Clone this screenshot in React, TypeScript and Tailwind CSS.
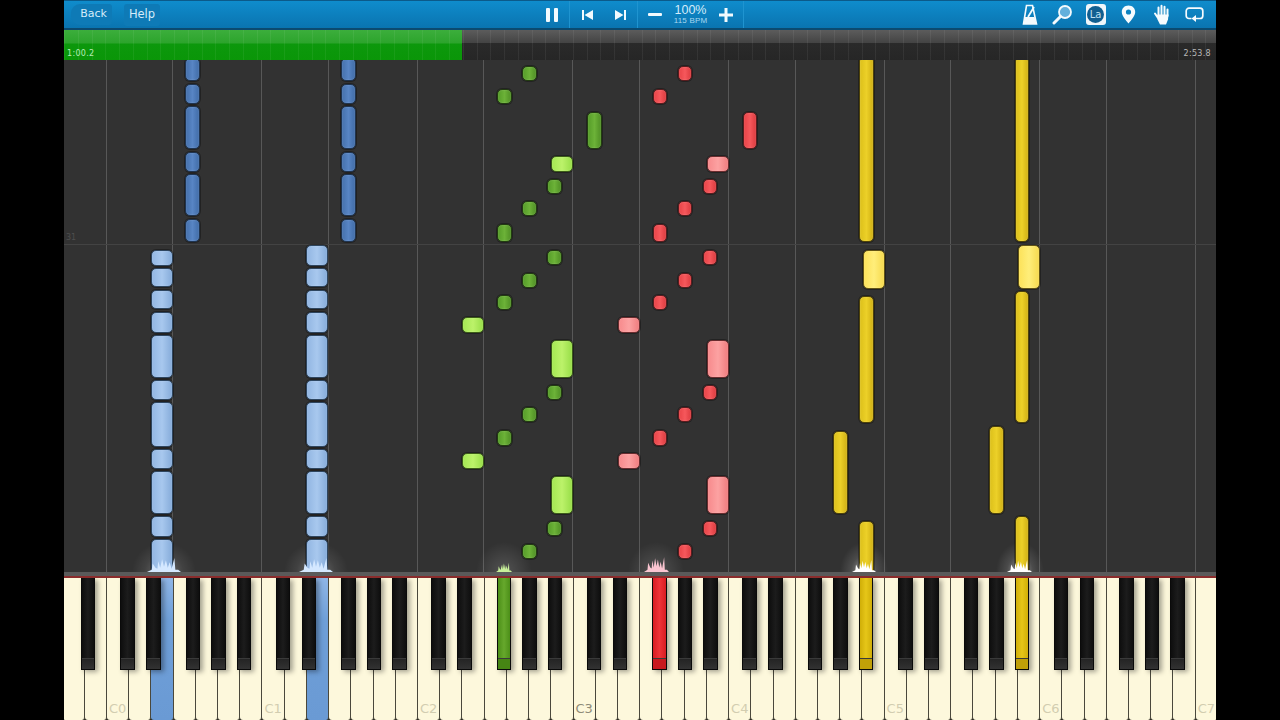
import React from "react";

const C0 = 106;
const OCT = 155.6;

type Kind = "blue" | "blueB" | "green" | "greenB" | "red" | "redB" | "yellow" | "yellowB";

const noteClass: Record<Kind, string> = {
  blue: "bg-[linear-gradient(90deg,#4470ac,#5885c4_50%,#406ca8)] border-[#1f3450]",
  blueB: "bg-[linear-gradient(90deg,#92b6e2,#a8c8ee_50%,#86acda)] border-[#2e4660]",
  green: "bg-[linear-gradient(90deg,#559c28,#6cb238_50%,#4f8f24)] border-[#223c10]",
  greenB: "bg-[linear-gradient(90deg,#a4e852,#bcf26a_50%,#98de48)] border-[#3c5c18]",
  red: "bg-[linear-gradient(90deg,#e84246,#f6585c_50%,#dc3a3e)] border-[#5a1c1e]",
  redB: "bg-[linear-gradient(90deg,#f78a8c,#fca2a2_50%,#f07c7e)] border-[#6a2c2e]",
  yellow: "bg-[linear-gradient(90deg,#dcc01a,#ecd028_50%,#d0b014)] border-[#4e4208]",
  yellowB: "bg-[linear-gradient(90deg,#fce25a,#ffee7a_50%,#f6da4e)] border-[#625414]",
};

type N = [number, number, number, Kind];

const greenPattern = (dx: number, d: Kind, b: Kind): N[] => [
  [522 + dx, 66, 81, d],
  [497 + dx, 89, 104, d],
  [587 + dx, 112, 149, d],
  [551 + dx, 156, 172, b],
  [547 + dx, 179, 194, d],
  [522 + dx, 201, 216, d],
  [497 + dx, 224, 242, d],
  [547 + dx, 250, 265, d],
  [522 + dx, 273, 288, d],
  [497 + dx, 295, 310, d],
  [462 + dx, 317, 333, b],
  [551 + dx, 340, 378, b],
  [547 + dx, 385, 400, d],
  [522 + dx, 407, 422, d],
  [497 + dx, 430, 446, d],
  [462 + dx, 453, 469, b],
  [551 + dx, 476, 514, b],
  [547 + dx, 521, 536, d],
  [522 + dx, 544, 559, d],
];

const blueRows: [number, number][] = [
  [268, 287], [290, 309], [312, 333], [335, 378], [380, 400], [402, 447], [449, 469], [471, 514], [516, 537],
];

const notes: N[] = [
  ...[185, 341].flatMap((x) =>
    ([[58, 81], [84, 104], [106, 149], [152, 172], [174, 216], [219, 242]] as [number, number][]).map(
      ([a, b]) => [x, a, b, "blue"] as N
    )
  ),
  [151, 250, 266, "blueB"],
  [306, 245, 266, "blueB"],
  ...[151, 306].flatMap((x) => blueRows.map(([a, b]) => [x, a, b, "blueB"] as N)),
  [151, 539, 573, "blueB"],
  [306, 539, 573, "blueB"],
  ...greenPattern(0, "green", "greenB"),
  ...greenPattern(155.6, "red", "redB"),
  [859, 56, 242, "yellow"],
  [863, 250, 289, "yellowB"],
  [859, 296, 423, "yellow"],
  [833, 431, 514, "yellow"],
  [859, 521, 576, "yellow"],
  [1014.5, 56, 242, "yellow"],
  [1018, 245, 289, "yellowB"],
  [1014.5, 291, 423, "yellow"],
  [989, 426, 514, "yellow"],
  [1014.5, 516, 576, "yellow"],
];

const gridLines = [106, 172, 261, 328, 417, 483, 572, 639, 728, 795, 884, 950, 1039, 1106, 1195];

const whiteActive: Record<number, string> = {
  4: "bg-[linear-gradient(180deg,#8fb6e6,#6f9fd8_30%,#6a9ad4)]",
  11: "bg-[linear-gradient(180deg,#8fb6e6,#6f9fd8_30%,#6a9ad4)]",
};

const blackOffsets = [14, 40, 79.5, 105, 130.5];
const blackActive: Record<string, string> = {
  "2-2": "bg-[linear-gradient(90deg,#4c8f18,#66a82c_50%,#4c8f18)]",
  "3-2": "bg-[linear-gradient(90deg,#d81c22,#ee3338_50%,#d81c22)]",
  "4-4": "bg-[linear-gradient(90deg,#d0ae08,#e6c618_50%,#d0ae08)]",
  "5-4": "bg-[linear-gradient(90deg,#d0ae08,#e6c618_50%,#d0ae08)]",
};
const tipActive: Record<string, string> = {
  "2-2": "bg-[#468514]",
  "3-2": "bg-[#c8191e]",
  "4-4": "bg-[#c0a008]",
  "5-4": "bg-[#c0a008]",
};

const blackKeys: { key: string; x: number }[] = [];
for (let o = -1; o <= 6; o++) {
  blackOffsets.forEach((off, i) => {
    const x = C0 + o * OCT + off;
    if (x > 64) blackKeys.push({ key: `${o}-${i}`, x });
  });
}

const strongGlow = "bg-[radial-gradient(closest-side,rgba(255,255,255,0.5),rgba(255,255,255,0.12)_55%,rgba(255,255,255,0))]";
const blueGlow = "bg-[radial-gradient(closest-side,rgba(255,255,255,0.3),rgba(255,255,255,0.08)_60%,rgba(255,255,255,0))]";
const softGlow = "bg-[radial-gradient(closest-side,rgba(255,255,255,0.16),rgba(255,255,255,0))]";

const hits: { x: number; w: number; h: number; fill: string; glowW: number; glow: string }[] = [
  { x: 164, w: 34, h: 15, fill: "#d4e8ff", glowW: 64, glow: blueGlow },
  { x: 316, w: 34, h: 15, fill: "#d4e8ff", glowW: 64, glow: blueGlow },
  { x: 503.5, w: 16, h: 10, fill: "#c8f09a", glowW: 56, glow: softGlow },
  { x: 656, w: 25, h: 16, fill: "#fac4d0", glowW: 56, glow: softGlow },
  { x: 864, w: 24, h: 13, fill: "#ffffff", glowW: 48, glow: strongGlow },
  { x: 1019.5, w: 25, h: 13, fill: "#ffffff", glowW: 48, glow: strongGlow },
];

function Spark({ x, w, h, fill }: { x: number; w: number; h: number; fill: string }) {
  return (
    <svg
      className="absolute"
      style={{ left: x - 64 - w / 2, top: 512 - h, width: w, height: h }}
      viewBox="0 0 36 14"
      preserveAspectRatio="none"
    >
      <polygon
        fill={fill}
        points="0,14 5,12 6,6 9,10 11,11 12,4 14,10 16,2 18,9 20,3 22,10 24,5 26,11 29,1 30,12 33,12 36,14"
      />
    </svg>
  );
}

function Icons() {
  return (
    <div className="ml-auto flex items-center pr-[5px]">
      <div className="flex h-[29px] w-[33px] items-center justify-center">
        <svg width="16" height="21" viewBox="0 0 16 21">
          <path d="M4.5 1.5h6L14.5 20h-13z" fill="none" stroke="#f4fafd" strokeWidth="1.6" />
          <path d="M3 13h9.5L14.5 20h-13z" fill="#f4fafd" />
          <path d="M6 13L12 3" stroke="#f4fafd" strokeWidth="1.8" />
        </svg>
      </div>
      <div className="flex h-[29px] w-[33px] items-center justify-center">
        <svg width="21" height="21" viewBox="0 0 21 21">
          <circle cx="13" cy="8" r="6" fill="#62b0dc" stroke="#f4fafd" strokeWidth="1.8" />
          <path d="M8.5 12.5L2 19" stroke="#f4fafd" strokeWidth="3" strokeLinecap="round" />
        </svg>
      </div>
      <div className="flex h-[29px] w-[33px] items-center justify-center">
        <div className="flex h-[21px] w-[20px] items-center justify-center rounded-[3px] bg-[#f0f6fa]">
          <span className="flex h-[17px] w-[17px] items-center justify-center rounded-full bg-[#115f90] font-['DejaVu_Sans',sans-serif] text-[10px] leading-none text-[#bfe0f2]">
            La
          </span>
        </div>
      </div>
      <div className="flex h-[29px] w-[33px] items-center justify-center">
        <svg width="15" height="19" viewBox="0 0 15 19">
          <path
            fillRule="evenodd"
            fill="#f6fbfe"
            d="M7.5 0.5C3.4 0.5 0.8 3.4 0.8 6.9 0.8 11 5 15 7.5 18.5 10 15 14.2 11 14.2 6.9 14.2 3.4 11.6 0.5 7.5 0.5zM7.5 4.4a2.6 2.6 0 1 1 0 5.2 2.6 2.6 0 0 1 0-5.2z"
          />
        </svg>
      </div>
      <div className="flex h-[29px] w-[33px] items-center justify-center">
        <svg width="18" height="21" viewBox="0 0 18 21">
          <path
            d="M2 9.5L5 14M5.5 12V3.5M8.5 11V1.8M11.5 11V2.8M14.5 12V5.5"
            stroke="#f6fbfe"
            strokeWidth="2"
            strokeLinecap="round"
            fill="none"
          />
          <path d="M4.5 10.5h11l-.5 5-2 5h-6l-2.5-5z" fill="#f6fbfe" />
        </svg>
      </div>
      <div className="flex h-[29px] w-[33px] items-center justify-center">
        <svg width="19" height="15" viewBox="0 0 19 15">
          <path
            d="M6.5 11.5H4a2.8 2.8 0 0 1-2.8-2.8V4A2.8 2.8 0 0 1 4 1.2h11A2.8 2.8 0 0 1 17.8 4v4.7A2.8 2.8 0 0 1 15 11.5H10"
            fill="none"
            stroke="#f6fbfe"
            strokeWidth="1.7"
          />
          <path d="M11 8v7l-4.5-3.5z" fill="#f6fbfe" />
        </svg>
      </div>
    </div>
  );
}

function Toolbar() {
  return (
    <div className="flex h-[30px] shrink-0 items-center border-t border-t-[#0b5a8a] border-b-2 border-b-[#0b4a70] bg-[linear-gradient(180deg,#0f8ccc,#0a74b0)] font-['DejaVu_Sans',sans-serif] text-[#d4ecfa]">
      <div className="flex w-[470px] shrink-0 items-center pl-[7px] text-[11px]">
        <div className="flex h-[21px] w-[41px] items-center justify-end rounded-r-[3px] rounded-l-[9px] bg-[#0e7ab6] pr-[5px]">
          Back
        </div>
        <div className="ml-[12px] flex h-[22px] w-[36px] items-center justify-center rounded-[3px] bg-[#0e7ab6] text-[11.5px]">
          Help
        </div>
      </div>
      <div className="flex h-full w-[36px] shrink-0 items-center justify-center border-r border-r-[#1f94d0]">
        <div className="flex h-[14px] gap-[4px]">
          <div className="h-full w-[4px] rounded-[1px] bg-[#f2fafe]" />
          <div className="h-full w-[4px] rounded-[1px] bg-[#f2fafe]" />
        </div>
      </div>
      <div className="flex h-full w-[68px] shrink-0 items-center justify-center gap-[22px] border-r border-r-[#1f94d0]">
        <svg width="11" height="10" viewBox="0 0 11 10">
          <path d="M0 0h2v10H0zM11 0v10L2.5 5z" fill="#f2fafe" />
        </svg>
        <svg width="11" height="10" viewBox="0 0 11 10">
          <path d="M11 0H9v10h2zM0 0v10l8.5-5z" fill="#f2fafe" />
        </svg>
      </div>
      <div className="flex h-full w-[106px] shrink-0 items-center justify-between border-r border-r-[#1f94d0] pl-[10px] pr-[10px]">
        <div className="h-[3px] w-[14px] rounded-[1px] bg-[#f2fafe]" />
        <div className="flex flex-col items-center leading-none">
          <span className="font-['Liberation_Sans',sans-serif] text-[12.5px] leading-[12px] text-[#d4ecfa]">100%</span>
          <span className="font-['Liberation_Sans',sans-serif] text-[8px] leading-[9px] tracking-[0.2px] text-[#a8d8f0]">115 BPM</span>
        </div>
        <svg width="14" height="14" viewBox="0 0 14 14">
          <path d="M5.5 0h3v5.5H14v3H8.5V14h-3V8.5H0v-3h5.5z" fill="#f2fafe" />
        </svg>
      </div>
      <Icons />
    </div>
  );
}

function Progress() {
  return (
    <div className="relative flex h-[30px] shrink-0 bg-[linear-gradient(180deg,#5c5c5c,#444_42%,#2a2a2a_44%,#262626)]">
      <div className="h-full w-[398px] bg-[linear-gradient(180deg,#3cae3c,#2ca42c_44%,#0c980c_46%,#0a9608)]" />
      <div className="absolute inset-0 bg-[repeating-linear-gradient(90deg,rgba(255,255,255,0.06)_0,rgba(255,255,255,0.06)_1px,rgba(255,255,255,0)_1px,rgba(255,255,255,0)_13.75px)]" />
      <span className="absolute bottom-[1px] left-[3px] font-['DejaVu_Sans',sans-serif] text-[8px] leading-[10px] tracking-[0.3px] text-[#b4ecb4]">
        1:00.2
      </span>
      <span className="absolute bottom-[1px] right-[5px] font-['DejaVu_Sans',sans-serif] text-[8px] leading-[10px] tracking-[0.3px] text-[#b8b8b8]">
        2:53.8
      </span>
    </div>
  );
}

function Roll() {
  return (
    <div className="relative h-[512px] shrink-0 overflow-hidden bg-[#323232]">
      {gridLines.map((x) => (
        <div key={x} className="absolute top-0 h-full w-px bg-[#585858]" style={{ left: x - 64 }} />
      ))}
      <div className="absolute left-0 top-[184px] h-px w-full bg-[#434343]" />
      <span className="absolute left-[2px] top-[173px] font-['DejaVu_Sans',sans-serif] text-[8px] leading-[10px] text-[#4e4e4e]">
        31
      </span>
      {hits.map((h) => (
        <div
          key={h.x}
          className={`absolute ${h.glow}`}
          style={{ left: h.x - 64 - h.glowW / 2, top: 512 - 30, width: h.glowW, height: 60 }}
        />
      ))}
      {notes.map(([x, a, b, k], i) => {
        const wide = k.endsWith("B");
        return (
          <div
            key={i}
            className={`absolute rounded-[5px] border ${noteClass[k]} shadow-[inset_0_0_2px_rgba(255,255,255,0.25),0_0_0_1px_rgba(0,0,0,0.3)]`}
            style={{ left: x - 64, top: a - 60, width: wide ? 22 : 14.5, height: b - a }}
          />
        );
      })}
      {hits.map((h) => (
        <Spark key={h.x} x={h.x} w={h.w} h={h.h} fill={h.fill} />
      ))}
    </div>
  );
}

function Keyboard() {
  return (
    <div className="relative h-[142px] shrink-0 overflow-hidden bg-[#2c2a22]">
      <div className="-ml-[1.5px] flex h-full">
        {Array.from({ length: 52 }).map((_, n) => (
          <div
            key={n}
            className={`relative h-full w-[22.23px] shrink-0 rounded-b-[3px] border-r border-r-[#4a483c] ${whiteActive[n] ?? "bg-[#fdf8dc]"}`}
          >
            {(n - 2) % 7 === 0 && n >= 2 && (
              <span
                className={`absolute bottom-[4px] left-[2px] font-['DejaVu_Sans',sans-serif] text-[13px] leading-[15px] ${
                  n === 23 ? "text-[#8f8c78]" : "text-[#d2cdb0]"
                }`}
              >
                {`C${(n - 2) / 7}`}
              </span>
            )}
          </div>
        ))}
      </div>
      {blackKeys.map(({ key, x }) => {
        const active = blackActive[key];
        return (
          <div
            key={key}
            className={`absolute top-0 flex h-[92px] w-[14.5px] flex-col justify-end border-x border-b border-[#0a0a0a] shadow-[3px_2px_5px_rgba(0,0,0,0.35)] ${
              active ?? "bg-[linear-gradient(90deg,#0e0e0e,#1c1c1c_50%,#0e0e0e)]"
            }`}
            style={{ left: x - 64 }}
          >
            <div className={`h-[11px] border-t border-t-[#3a3a3a] ${tipActive[key] ?? "bg-[linear-gradient(180deg,#242424,#323232)]"}`} />
          </div>
        );
      })}
    </div>
  );
}

export default function App() {
  return (
    <div className="flex h-[720px] w-[1280px] justify-center overflow-hidden bg-black">
      <div className="flex w-[1152px] flex-col">
        <Toolbar />
        <Progress />
        <Roll />
        <div className="h-[6px] shrink-0 border-b-2 border-b-[#8a2c2c] bg-[#5a5a5a]" />
        <Keyboard />
      </div>
    </div>
  );
}
